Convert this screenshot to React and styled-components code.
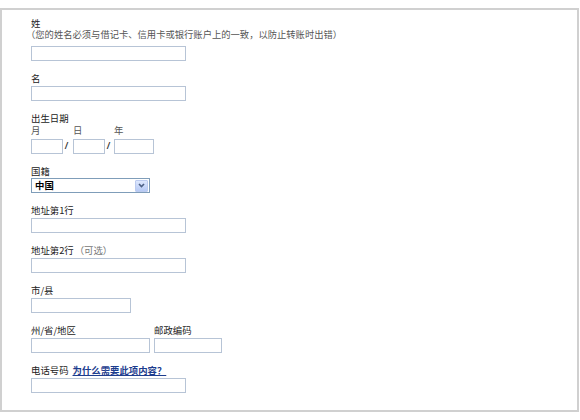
import React from "react";
import styled, { createGlobalStyle } from "styled-components";

const Global = createGlobalStyle`
  html, body { margin: 0; padding: 0; background: #fff; }
  body {
    font-family: "Noto Sans CJK SC", "Noto Sans", sans-serif;
    font-size: 9.4px;
    color: #222;
  }
`;

const Panel = styled.div`
  margin-top: 8px;
  width: 579px;
  height: 404px;
  box-sizing: border-box;
  border: 2px solid #d0d0d0;
  padding: 8px 0 0 29px;
`;

const Form = styled.form`
  display: flex;
  flex-direction: column;
  gap: 11px;
`;

const Field = styled.div`
  display: flex;
  flex-direction: column;
  align-items: flex-start;
`;

const Label = styled.div`
  line-height: ${(p) => p.$h || 12}px;
  height: ${(p) => p.$h || 12}px;
  color: #222;
  white-space: nowrap;
`;

const Note = styled.div`
  font-size: 9.3px;
  line-height: 10px;
  margin-left: ${(p) => p.$ml || 0}px;
  color: #555;
  white-space: nowrap;
`;

const Optional = styled.span`
  font-family: "Noto Sans CJK TC", "Noto Sans CJK SC", sans-serif;
  color: #777;
  margin-left: 1px;
`;

const TextInput = styled.input`
  display: block;
  box-sizing: border-box;
  width: ${(p) => p.$w || 155}px;
  height: 15px;
  margin: ${(p) => (p.$mt ?? 2)}px 0 0 0;
  padding: 0 2px;
  border: 1px solid #b7c4d6;
  background: #fff;
  font: inherit;
  outline: none;
`;

const DateGrid = styled.div`
  display: grid;
  grid-template-columns: 32px 10px 32px 9px 40px;
  grid-template-rows: 13px auto;
`;

const SubLabel = styled.div`
  line-height: 13px;
  color: #555;
  grid-row: 1;
  grid-column: ${(p) => p.$col};
`;

const DateInput = styled(TextInput)`
  width: 100%;
  grid-row: 2;
  grid-column: ${(p) => p.$col};
`;

const Slash = styled.span`
  grid-row: 2;
  grid-column: ${(p) => p.$col};
  margin-top: 2px;
  padding-left: 2px;
  line-height: 15px;
  color: #333;
  font-family: "Liberation Sans", sans-serif;
  font-size: 9px;
  font-style: italic;
  font-weight: bold;
`;

const SelectBox = styled.div`
  box-sizing: border-box;
  width: 119px;
  height: 15px;
  margin-top: 1px;
  border: 1px solid #7f9db9;
  display: flex;
  align-items: center;
  justify-content: space-between;
  background: #fff;
`;

const SelectValue = styled.span`
  padding-left: 3px;
  line-height: 13px;
  color: #000;
  font-weight: bold;
`;

const DropButton = styled.span`
  box-sizing: border-box;
  width: 13px;
  height: 12px;
  margin-right: 1px;
  border: 1px solid #bccbef;
  border-radius: 1px;
  background: linear-gradient(#dde7fd, #b7caf5);
  display: flex;
  align-items: center;
  justify-content: center;
`;

const PairGrid = styled.div`
  display: grid;
  grid-template-columns: 119px 68px;
  column-gap: 4px;
`;

const PairInput = styled(TextInput)`
  width: 100%;
`;

const LabelRow = styled.div`
  display: flex;
  gap: 4px;
  line-height: 12px;
  height: 12px;
  white-space: nowrap;
`;

const HelpLink = styled.a`
  color: #1c3c8e;
  font-weight: bold;
  text-decoration: underline;
  cursor: pointer;
`;

export default function App() {
  return (
    <>
      <Global />
      <Panel>
        <Form onSubmit={(e) => e.preventDefault()}>
          <Field>
            <Label $h={11}>姓</Label>
            <Note $ml={-5}>（您的姓名必须与借记卡、信用卡或银行账户上的一致，以防止转账时出错）</Note>
            <TextInput $mt={7} />
          </Field>
          <Field>
            <Label>名</Label>
            <TextInput />
          </Field>
          <Field>
            <Label>出生日期</Label>
            <DateGrid>
              <SubLabel $col={1}>月</SubLabel>
              <SubLabel $col={3}>日</SubLabel>
              <SubLabel $col={5}>年</SubLabel>
              <DateInput $col={1} />
              <Slash $col={2}>/</Slash>
              <DateInput $col={3} />
              <Slash $col={4}>/</Slash>
              <DateInput $col={5} />
            </DateGrid>
          </Field>
          <Field>
            <Label>国籍</Label>
            <SelectBox role="combobox" aria-label="国籍">
              <SelectValue>中国</SelectValue>
              <DropButton>
                <svg width="7" height="5" viewBox="0 0 7 5">
                  <path d="M1 1 L3.5 3.6 L6 1" fill="none" stroke="#4d6185" strokeWidth="1.6" />
                </svg>
              </DropButton>
            </SelectBox>
          </Field>
          <Field>
            <Label>地址第1行</Label>
            <TextInput />
          </Field>
          <Field>
            <Label>
              地址第2行<Optional>（可选）</Optional>
            </Label>
            <TextInput />
          </Field>
          <Field>
            <Label>市/县</Label>
            <TextInput $w={100} />
          </Field>
          <PairGrid>
            <Label>州/省/地区</Label>
            <Label>邮政编码</Label>
            <PairInput />
            <PairInput />
          </PairGrid>
          <Field>
            <LabelRow>
              <span>电话号码</span>
              <HelpLink href="#">为什么需要此项内容？</HelpLink>
            </LabelRow>
            <TextInput />
          </Field>
        </Form>
      </Panel>
    </>
  );
}
